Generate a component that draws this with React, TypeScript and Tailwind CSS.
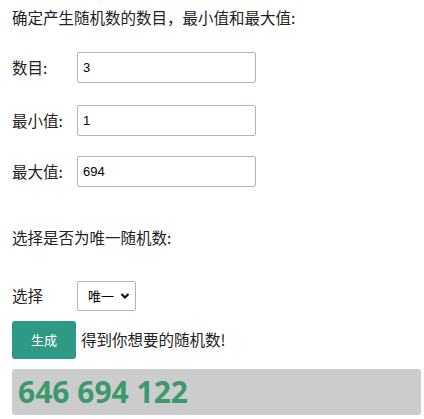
import React from 'react';

const font = { fontFamily: '"Noto Sans CJK SC", "Noto Sans", sans-serif' };

const Field: React.FC<{ label: string; value: string; className: string }> = ({ label, value, className }) => (
    <div className={`flex items-center h-[31px] ${className}`}>
        <span className="w-[65px] text-[15.5px] text-[#222]">{label}</span>
        <input
            defaultValue={value}
            className="w-[179px] h-[31px] border border-[#bcb2a9] rounded-[2px] pl-[5px] text-[13px] text-black outline-none bg-white"
            style={{ fontFamily: '"Liberation Sans", Arial, sans-serif' }}
        />
    </div>
);

export default function App() {
    return (
        <div className="px-3 bg-white min-h-[419px] text-[#222]" style={font}>
            {/* heading */}
            <p className="pt-[5px] text-[15.5px] leading-6">确定产生随机数的数目，最小值和最大值:</p>

            <Field label="数目:" value="3" className="mt-[23px]" />
            <Field label="最小值:" value="1" className="mt-[22px]" />
            <Field label="最大值:" value="694" className="mt-[20px]" />

            <p className="mt-[38px] text-[15.5px] leading-6">选择是否为唯一随机数:</p>

            <div className="mt-[32px] flex items-center h-[30px]">
                <span className="w-[65px] text-[15.5px]">选择</span>
                <div className="relative">
                    <select className="appearance-none w-[59px] h-[30px] border border-[#bcb2a9] rounded-[2px] pl-[10px] text-[13px] bg-white text-black outline-none">
                        <option>唯一</option>
                        <option>不唯一</option>
                    </select>
                    <svg className="absolute right-[6px] top-[11px] pointer-events-none" width="10" height="8" viewBox="0 0 10 8">
                        <path d="M1.5 2 L5 5.5 L8.5 2" fill="none" stroke="#111" strokeWidth="2.2" />
                    </svg>
                </div>
            </div>

            {/* generate */}
            <div className="mt-[10px] flex items-center">
                <button className="w-[64px] h-[38px] bg-[#2e9a86] text-white text-[13px] rounded-[3px]">生成</button>
                <span className="ml-[5px] text-[15.5px]">得到你想要的随机数!</span>
            </div>

            {/* result */}
            <div className="mt-[10px] w-[409px] h-[46px] bg-[#cccccc] rounded-[3px] flex items-center pl-[6px]">
                <span
                    className="text-[30px] font-bold text-[#3a9a6b] leading-none"
                    style={{ fontFamily: '"Open Sans", sans-serif' }}
                >
                    646 694 122
                </span>
            </div>
        </div>
    );
}
